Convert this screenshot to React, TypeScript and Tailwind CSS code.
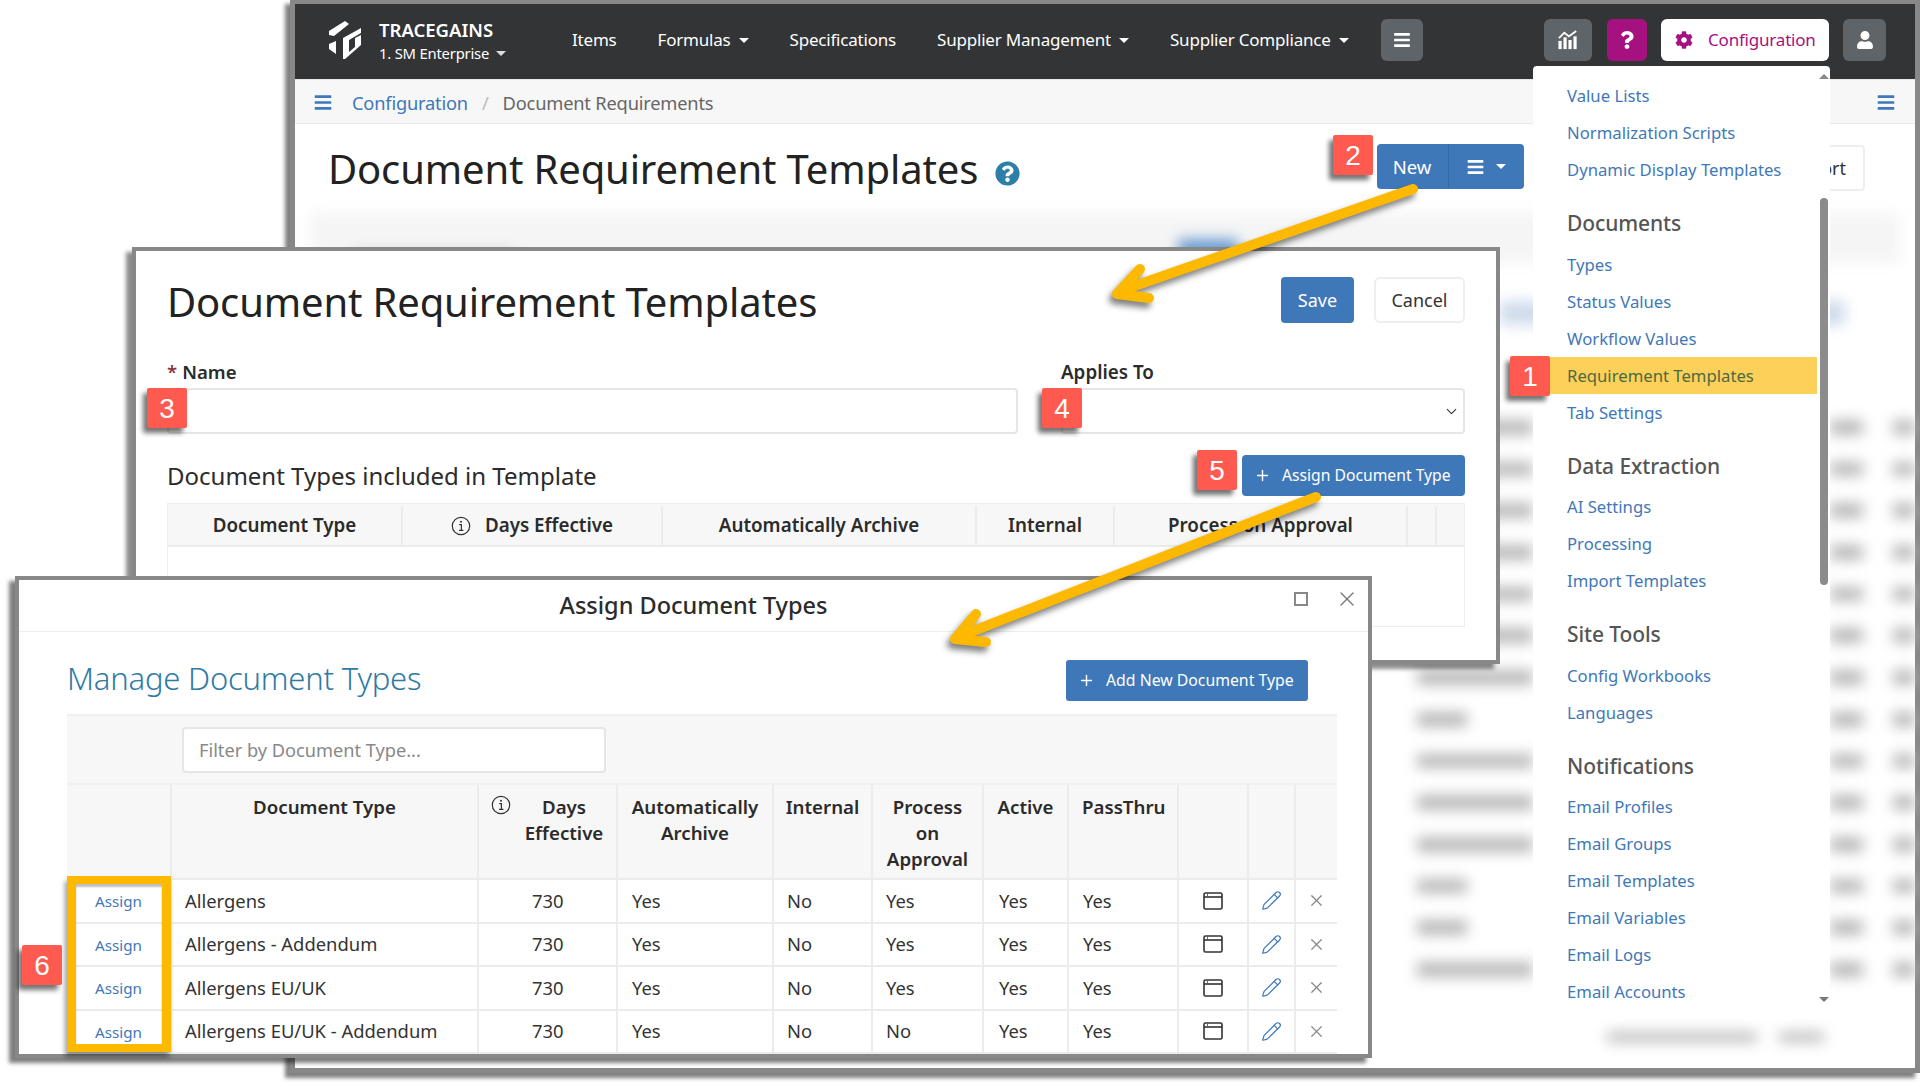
import React from "react";
import { FaBars, FaCog, FaQuestion, FaQuestionCircle, FaUser } from "react-icons/fa";
import { ChevronDown, Pencil, Plus, X } from "lucide-react";

const Caret = ({ color = "border-t-white" }: { color?: string }) => (
  <span className={`inline-block w-0 h-0 border-x-[5px] border-x-transparent border-t-[5px] ${color}`} />
);

const Badge = ({ n, cls }: { n: string; cls: string }) => (
  <div className={`absolute w-10 h-10 pt-[2px] rounded-[2px] bg-[#ff5a4f] text-white flex items-center justify-center text-[28px] [font-family:'Liberation_Sans',sans-serif] shadow-[-4px_5px_5px_rgba(0,0,0,0.55)] ${cls}`}>
    {n}
  </div>
);

const Logo = () => (
  <svg viewBox="10 8 38 42" className="w-[38px] h-[42px]" fill="#fff">
    <path d="M13 20 L29 10 L33 13 L18 25 L13 24 Z" />
    <path d="M13 33 L20 30 L20 43 L13 38 Z" />
    <path d="M27 27 L45 17 L45 22 L33 29 L33 41 L39 36 L39 27 L45 24 L45 34 L29 48 L27 48 Z" />
  </svg>
);

const ChartIcon = () => (
  <svg viewBox="0 0 24 22" className="w-[22px] h-[20px]" fill="none">
    <path d="M2 9 L8 3 L13 7 L21 1" stroke="#fff" strokeWidth="2" />
    <rect x="1.5" y="12" width="3.5" height="9" fill="#fff" />
    <rect x="7" y="8" width="3.5" height="13" fill="#fff" />
    <rect x="12.5" y="11" width="3.5" height="10" fill="#fff" />
    <rect x="18" y="7" width="3.5" height="14" fill="#fff" />
  </svg>
);

const InfoIcon = () => (
  <svg viewBox="0 0 20 20" className="w-[20px] h-[20px]" fill="none" stroke="#333">
    <circle cx="10" cy="10" r="8.7" strokeWidth="1.2" />
    <circle cx="10" cy="5.8" r="1" fill="#333" stroke="none" />
    <path d="M8.2 8.6 H10.4 V14.2 M8 14.4 H12.4" strokeWidth="1.2" />
  </svg>
);

const WindowIcon = () => (
  <svg viewBox="0 0 20 18" className="w-[20px] h-[18px]" fill="none" stroke="#333" strokeWidth="1.6">
    <rect x="1" y="1" width="18" height="16" rx="1.5" />
    <path d="M1 5 H19" />
    <path d="M4 3 H5" strokeWidth="1.4" />
  </svg>
);

const Hdr = ({ children, cls = "" }: { children?: React.ReactNode; cls?: string }) => (
  <div className={`border-r-2 border-[#ececec] flex font-semibold text-[#2b2b2b] ${cls}`}>{children}</div>
);

const menu: { h?: string; items: string[] }[] = [
  { items: ["Value Lists", "Normalization Scripts", "Dynamic Display Templates"] },
  { h: "Documents", items: ["Types", "Status Values", "Workflow Values", "Requirement Templates", "Tab Settings"] },
  { h: "Data Extraction", items: ["AI Settings", "Processing", "Import Templates"] },
  { h: "Site Tools", items: ["Config Workbooks", "Languages"] },
  { h: "Notifications", items: ["Email Profiles", "Email Groups", "Email Templates", "Email Variables", "Email Logs", "Email Accounts"] },
];

const rows = [
  ["Allergens", "Yes"],
  ["Allergens - Addendum", "Yes"],
  ["Allergens EU/UK", "Yes"],
  ["Allergens EU/UK - Addendum", "No"],
];

const blurRows = [true, true, true, true, true, true, true, false, true, true, true, false, false, true];

const Cell = ({ children, cls = "" }: { children?: React.ReactNode; cls?: string }) => (
  <div className={`border-r-2 border-[#ececec] flex items-center ${cls}`}>{children}</div>
);

export default function App() {
  return (
    <div className="relative w-[1920px] h-[1085px] overflow-hidden bg-white text-[#333] [font-family:'Noto_Sans',sans-serif]">
      {/* Back window */}
      <div className="absolute left-[290px] top-[-1px] w-[1630px] h-[1074px] border-[5px] border-[#888] bg-white shadow-[-5px_5px_4px_rgba(0,0,0,0.5)] flex flex-col">
        <div className="h-[75px] shrink-0 bg-[#333436] flex items-center pb-[3px] pl-[31px] pr-[29px] text-white text-[17px] tracking-[-0.2px]">
          <Logo />
          <div className="ml-[15px] w-[193px] flex flex-col pt-[2px]">
            <span className="text-[18.5px] font-semibold leading-[24px] tracking-[0px]">TRACEGAINS</span>
            <span className="text-[14.8px] leading-[22px] flex items-center gap-[7px]">1. SM Enterprise <Caret color="border-t-[#ddd]" /></span>
          </div>
          <div className="flex items-center gap-[41px]">
            <span>Items</span>
            <span className="flex items-center gap-[8px]">Formulas <Caret /></span>
            <span>Specifications</span>
            <span className="flex items-center gap-[8px]">Supplier Management <Caret /></span>
            <span className="flex items-center gap-[8px]">Supplier Compliance <Caret /></span>
          </div>
          <div className="ml-[32px] w-[42px] h-[42px] rounded-[6px] bg-[#5f6468] flex items-center justify-center"><FaBars className="w-[18px] h-[18px]" /></div>
          <div className="ml-auto flex items-center">
            <div className="w-[48px] h-[42px] rounded-[6px] bg-[#5f6468] flex items-center justify-center"><ChartIcon /></div>
            <div className="ml-[15px] w-[40px] h-[42px] rounded-[6px] bg-[#a5117f] flex items-center justify-center"><FaQuestion className="w-[18px] h-[18px]" /></div>
            <div className="ml-[14px] w-[168px] h-[42px] rounded-[6px] bg-white flex items-center pl-[14px] gap-[15px] text-[#a5117f]"><FaCog className="w-[18px] h-[18px]" />Configuration</div>
            <div className="ml-[14px] w-[43px] h-[42px] rounded-[6px] bg-[#5f6468] flex items-center justify-center"><FaUser className="w-[18px] h-[18px]" /></div>
          </div>
        </div>
        <div className="h-[45px] shrink-0 bg-[#f7f7f7] border-y border-y-[#e8e8e8] flex items-center pt-[2px] pl-[19px] pr-[20px] text-[18.3px] tracking-[-0.2px]">
          <FaBars className="w-[18px] h-[19px] text-[#3f78b8]" />
          <span className="ml-[20px] text-[#3f78b8]">Configuration</span>
          <span className="mx-[14px] text-[#bbb]">/</span>
          <span className="text-[#666]">Document Requirements</span>
          <FaBars className="ml-auto w-[18px] h-[19px] text-[#3f78b8]" />
        </div>
        <div className="h-[89px] shrink-0 flex pl-[33px] pr-[50px]">
          <div className="flex items-center h-[90px] gap-[17px]">
            <span className="text-[40px] leading-none text-[#222] tracking-[-0.15px]">Document Requirement Templates</span>
            <FaQuestionCircle className="w-[25px] h-[25px] text-[#2e7fa8] mt-[8px]" />
          </div>
          <div className="ml-auto mt-[20px] h-[45px] rounded-[4px] bg-[#3f78b8] text-white flex text-[18.5px]">
            <span className="w-[72px] flex items-center justify-center border-r border-[#356aa5]">New</span>
            <span className="w-[75px] flex items-center justify-center gap-[11px]"><FaBars className="w-[19px] h-[18px]" /><Caret /></span>
          </div>
          <div className="ml-[248px] mt-[21px] h-[46px] px-[17px] rounded-[4px] border-2 border-[#eee] flex items-center text-[18px]">Export</div>
        </div>
        {/* blurred page behind */}
        <div className="flex-1 flex flex-col blur-[7px]">
          <div className="mx-[15px] h-[50px] bg-[#f5f5f5] flex items-end pl-[45px] pb-[2px] pr-[662px] justify-between">
            <span className="w-[160px] h-[10px] bg-[#c8c8c8]" />
            <span className="w-[60px] h-[22px] rounded bg-[#6a9bd0]" />
          </div>
          <div className="mt-[38px] h-[24px] ml-[1205px] mr-[70px] bg-[#cfdcec]" />
          <div className="mt-[95px] flex flex-col gap-[27px]">
            {blurRows.map((long, i) => (
              <div key={i} className="h-[14.7px] flex">
                <span className={`ml-[1122px] bg-[#b8b8b8] ${long ? "w-[116px]" : "w-[50px]"}`} />
                <span className={`${long ? "ml-[297px]" : "ml-[363px]"} w-[33px] bg-[#b8b8b8]`} />
                <span className="ml-[30px] w-[22px] bg-[#b8b8b8]" />
              </div>
            ))}
          </div>
          <div className="mt-[55px] ml-[1312px] flex gap-[22px]">
            <span className="w-[150px] h-[10px] bg-[#bbb]" />
            <span className="w-[45px] h-[10px] bg-[#bbb]" />
          </div>
        </div>
        {/* Dropdown */}
        <div className="absolute left-[1238px] top-[62px] w-[297px] h-[947px] bg-white rounded-t-[4px] pt-[11px]">
          {menu.map((g, gi) => (
            <div key={gi}>
              {g.h && <div className="mt-[16px] mb-[1.6px] h-[40px] pl-[34px] flex items-center text-[21px] font-medium text-[#555] tracking-[-0.1px]">{g.h}</div>}
              {g.items.map((it) => (
                it === "Requirement Templates" ? (
                  <div key={it} className="ml-[17px] w-[267px] pl-[17px] h-[37px] flex items-center bg-[#fdd05a] text-[#4c6a3f] text-[16.7px]">{it}</div>
                ) : (
                  <div key={it} className="h-[37px] pl-[34px] flex items-center text-[16.7px] text-[#3f78b8]">{it}</div>
                )
              ))}
            </div>
          ))}
          <div className="absolute right-[1px] top-[8px] bottom-[5px] w-[10px] flex flex-col items-center">
            <Caret color="border-t-[#888] rotate-180" />
            <div className="mt-[119px] h-[387px] w-[8px] rounded-[4px] bg-[#8b8b8b]" />
            <div className="mt-auto"><Caret color="border-t-[#777]" /></div>
          </div>
        </div>
      </div>

      {/* Middle window */}
      <div className="absolute left-[132px] top-[247px] w-[1368px] h-[417px] border-4 border-[#888] bg-white shadow-[-6px_5px_4px_rgba(0,0,0,0.45)] pl-[31px] pr-[31px] pt-[26px]">
        <div className="flex items-center h-[46px]">
          <span className="text-[40px] leading-none tracking-[-0.15px] mt-[3px] text-[#222]">Document Requirement Templates</span>
          <span className="ml-auto w-[73px] h-[46px] rounded-[4px] bg-[#3f78b8] text-white text-[18px] flex items-center justify-center">Save</span>
          <span className="ml-[20px] w-[91px] h-[46px] rounded-[6px] border-2 border-[#eee] text-[18px] flex items-center justify-center">Cancel</span>
        </div>
        <div className="mt-[35px] grid grid-cols-[851px_404px] gap-x-[43px]">
          <div>
            <div className="h-[28px] mb-[2px] flex items-center gap-[5px] text-[18.6px] font-semibold text-[#2b2b2b]"><span className="text-[#8b3a3a]">*</span>Name</div>
            <div className="h-[46px] rounded-[4px] border-2 border-[#e6e6e6]" />
          </div>
          <div>
            <div className="h-[28px] mb-[2px] flex items-center text-[18.8px] font-semibold text-[#2b2b2b]">Applies To</div>
            <div className="h-[46px] rounded-[4px] border-2 border-[#e6e6e6] flex items-center justify-end pr-[3px]"><ChevronDown className="w-[17px] h-[17px]" strokeWidth={1.5} /></div>
          </div>
        </div>
        <div className="mt-[21px] h-[41px] flex items-center">
          <span className="text-[24px] mt-[1px] text-[#2b2b2b]">Document Types included in Template</span>
          <span className="ml-auto w-[223px] h-[41px] rounded-[4px] bg-[#3f78b8] text-white text-[15.7px] flex items-center pl-[12px] gap-[11px]"><Plus className="w-[17px] h-[17px]" />Assign Document Type</span>
        </div>
        <div className="mt-[7px] border border-[#eee] h-[124px]">
          <div className="h-[43px] pt-[2px] bg-[#f7f7f7] border-b-2 border-[#ececec] grid grid-cols-[235px_260px_314px_138px_293px_29px_28px] text-[18.8px]">
            <Hdr cls="items-center justify-center">Document Type</Hdr>
            <Hdr cls="items-center justify-center gap-[14px]"><InfoIcon />Days Effective</Hdr>
            <Hdr cls="items-center justify-center">Automatically Archive</Hdr>
            <Hdr cls="items-center justify-center">Internal</Hdr>
            <Hdr cls="items-center justify-center">Process on Approval</Hdr>
            <Hdr />
            <div />
          </div>
        </div>
      </div>

      {/* Front window */}
      <div className="absolute left-[15px] top-[576px] w-[1357px] h-[482px] border-4 border-[#888] bg-white overflow-hidden shadow-[-6px_5px_4px_rgba(0,0,0,0.5)]">
        <div className="h-[52px] border-b border-[#eee] grid grid-cols-[1fr_auto_1fr] items-center">
          <span />
          <span className="text-[23.5px] font-medium text-[#2b2b2b]">Assign Document Types</span>
          <div className="flex items-center justify-end gap-[27px] -mt-[13px] pr-[9px] text-[#777]">
            <span className="w-[14px] h-[14px] border-2 border-[#888]" />
            <X className="w-[24px] h-[24px]" strokeWidth={1.4} />
          </div>
        </div>
        <div className="pl-[48px] pr-[31px]">
          <div className="mt-[28px] h-[41px] flex items-center pr-[29px]">
            <span className="text-[31px] -mt-[4px] font-light text-[#2f7aa5] tracking-[-0.2px]">Manage Document Types</span>
            <span className="ml-auto w-[242px] h-[41px] rounded-[3px] bg-[#3f78b8] text-white text-[15.8px] flex items-center pl-[12px] gap-[11px]"><Plus className="w-[17px] h-[17px]" />Add New Document Type</span>
          </div>
          <div className="mt-[13px] h-[71px] bg-[#f7f7f7] border-y-2 border-[#f0f0f0] pt-[11px] pl-[115px]">
            <div className="w-[424px] h-[46px] pt-[2px] bg-white rounded-[4px] border-2 border-[#e6e6e6] flex items-center pl-[15px] text-[18.2px] text-[#888]">Filter by Document Type...</div>
          </div>
          <div className="h-[95px] bg-[#f7f7f7] border-b-2 border-[#ececec] grid grid-cols-[105px_307px_139px_156px_99px_111px_85px_110px_70px_47px_41px] text-[18.7px] leading-[26px] text-center">
            <Hdr />
            <Hdr cls="justify-center pt-[9px]">Document Type</Hdr>
            <Hdr cls="pt-[9px] pl-[12px] gap-[11px]"><span className="mt-[1px]"><InfoIcon /></span><span className="w-[84px]">Days Effective</span></Hdr>
            <Hdr cls="justify-center pt-[9px]">Automatically Archive</Hdr>
            <Hdr cls="justify-center pt-[9px]">Internal</Hdr>
            <Hdr cls="justify-center pt-[9px]"><span className="w-[96px]">Process on Approval</span></Hdr>
            <Hdr cls="justify-center pt-[9px]">Active</Hdr>
            <Hdr cls="pl-[13px] pt-[9px]">PassThru</Hdr>
            <Hdr />
            <Hdr />
            <div />
          </div>
          {rows.map(([name, proc]) => (
            <div key={name} className="h-[43.5px] border-b-2 border-[#ececec] grid grid-cols-[105px_307px_139px_156px_99px_111px_85px_110px_70px_47px_41px] text-[18.4px] text-[#333]">
              <div className="border-r-2 border-[#ececec] flex items-center justify-center pt-[2px] text-[15.2px] text-[#3f78b8]">Assign</div>
              <Cell cls="pl-[13px]">{name}</Cell>
              <Cell cls="pl-[53px]">730</Cell>
              <Cell cls="pl-[14px]">Yes</Cell>
              <Cell cls="pl-[13px]">No</Cell>
              <Cell cls="pl-[13px]">{proc}</Cell>
              <Cell cls="pl-[15px]">Yes</Cell>
              <Cell cls="pl-[14px]">Yes</Cell>
              <Cell cls="justify-center"><WindowIcon /></Cell>
              <Cell cls="justify-center"><Pencil className="w-[21px] h-[21px] text-[#3f78b8]" strokeWidth={1.4} /></Cell>
              <div className="flex items-center justify-center"><X className="w-[19px] h-[19px] text-[#888]" strokeWidth={1.5} /></div>
            </div>
          ))}
        </div>
      </div>

      {/* Annotations */}
      <div className="absolute left-[67px] top-[876px] w-[104px] h-[176px] border-x-[9px] border-y-[8px] border-[#fdb900] shadow-[-2px_5px_5px_rgba(0,0,0,0.4),inset_0_3px_2px_rgba(0,0,0,0.25)]" />
      <Badge n="1" cls="left-[1510px] top-[356px]" />
      <Badge n="2" cls="left-[1333px] top-[135px]" />
      <Badge n="3" cls="left-[147px] top-[388px]" />
      <Badge n="4" cls="left-[1042px] top-[388px]" />
      <Badge n="5" cls="left-[1197px] top-[450px]" />
      <Badge n="6" cls="left-[22px] top-[945px]" />

      <svg viewBox="0 0 1920 1085" className="absolute inset-0 w-[1920px] h-[1085px] pointer-events-none drop-shadow-[-3px_5px_3px_rgba(0,0,0,0.5)]" fill="none" stroke="#fdb900" strokeLinecap="round" strokeLinejoin="round">
        <path d="M1413 189 L1120 291" strokeWidth="10" />
        <path d="M1140 269 L1117 294 L1149 298" strokeWidth="10" />
        <path d="M1316 497 L958 637" strokeWidth="10" />
        <path d="M976 614 L955 639 L986 642" strokeWidth="10" />
      </svg>
    </div>
  );
}
